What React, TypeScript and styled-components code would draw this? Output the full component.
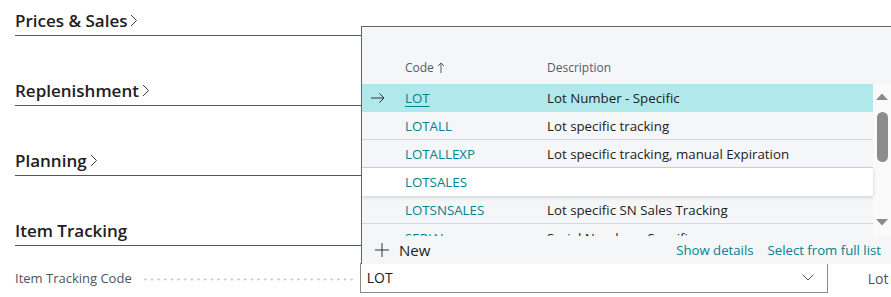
import React from "react";
import styled, { createGlobalStyle } from "styled-components";

const GlobalStyle = createGlobalStyle`
  html, body {
    margin: 0;
    padding: 0;
    background: #ffffff;
    overflow: hidden;
  }
  body {
    font-family: "Open Sans", "Noto Sans", sans-serif;
    color: #212121;
  }
`;

const TEAL = "#00838c";

type Lookup = { code: string; description: string; state?: "selected" | "hover" };

const lookups: Lookup[] = [
  { code: "LOT", description: "Lot Number - Specific", state: "selected" },
  { code: "LOTALL", description: "Lot specific tracking" },
  { code: "LOTALLEXP", description: "Lot specific tracking, manual Expiration" },
  { code: "LOTSALES", description: "", state: "hover" },
  { code: "LOTSNSALES", description: "Lot specific SN Sales Tracking" },
  { code: "SERIAL", description: "Serial Number - Specific" },
];

const sections = [
  { title: "Prices & Sales", more: true },
  { title: "Replenishment", more: true },
  { title: "Planning", more: true },
  { title: "Item Tracking", more: false },
];

function Chevron() {
  return (
    <svg width="8" height="13" viewBox="0 0 8 13">
      <polyline points="1,1 6.5,6.5 1,12" fill="none" stroke="#3b3b3b" strokeWidth="1" />
    </svg>
  );
}

function App() {
  return (
    <>
      <GlobalStyle />
      <Page>
        {sections.map((s) => (
          <Section key={s.title}>
            <Heading>
              {s.title}
              {s.more && <Chevron />}
            </Heading>
          </Section>
        ))}

        <FieldRow>
          <FieldLabel>Item Tracking Code</FieldLabel>
          <Leader />
          <Combo>
            <span>LOT</span>
            <svg width="12" height="7" viewBox="0 0 12 7">
              <polyline points="0.5,0.5 6,6 11.5,0.5" fill="none" stroke="#505050" strokeWidth="1" />
            </svg>
          </Combo>
          <NextLabel>Lot</NextLabel>
        </FieldRow>

        <Dropdown>
          <ColumnHeader>
            <span />
            <span>
              Code
              <svg width="8" height="11" viewBox="0 0 8 11">
                <line x1="4" y1="1" x2="4" y2="11" stroke="#505c6d" strokeWidth="1" />
                <polyline points="1,4 4,1 7,4" fill="none" stroke="#505c6d" strokeWidth="1" />
              </svg>
            </span>
            <span>Description</span>
          </ColumnHeader>

          <ListArea>
            <Rows>
              {lookups.map((row) => (
                <Row key={row.code} $state={row.state}>
                  <RowMarker>
                    {row.state === "selected" && (
                      <svg width="14" height="10" viewBox="0 0 14 10">
                        <line x1="0" y1="5" x2="13" y2="5" stroke="#333" strokeWidth="1" />
                        <polyline points="8.5,0.5 13,5 8.5,9.5" fill="none" stroke="#333" strokeWidth="1" />
                      </svg>
                    )}
                  </RowMarker>
                  <CodeCell $active={row.state === "selected"}>{row.code}</CodeCell>
                  <span>{row.description}</span>
                </Row>
              ))}
            </Rows>
            <Scrollbar>
              <svg width="12" height="7" viewBox="0 0 12 7">
                <polygon points="0,7 6,0.5 12,7" fill="#8a8a8a" />
              </svg>
              <Thumb />
              <svg width="12" height="7" viewBox="0 0 12 7">
                <polygon points="0,0 12,0 6,6.5" fill="#8a8a8a" />
              </svg>
            </Scrollbar>
          </ListArea>

          <Footer>
            <NewAction>
              <svg width="14" height="14" viewBox="0 0 14 14">
                <line x1="7" y1="0" x2="7" y2="14" stroke="#333" strokeWidth="1" />
                <line x1="0" y1="7" x2="14" y2="7" stroke="#333" strokeWidth="1" />
              </svg>
              New
            </NewAction>
            <FooterLinks>
              <span>Show details</span>
              <span>Select from full list</span>
            </FooterLinks>
          </Footer>
        </Dropdown>
      </Page>
    </>
  );
}

const Page = styled.div`
  position: relative;
  width: 891px;
  height: 297px;
  padding-left: 15px;
  box-sizing: border-box;
`;

const Section = styled.section`
  margin-bottom: 34px;
  &:last-of-type {
    margin-bottom: 17px;
  }
`;

const Heading = styled.h2`
  margin: 0;
  height: 36px;
  box-sizing: border-box;
  display: flex;
  align-items: flex-end;
  gap: 3px;
  padding-bottom: 3px;
  font-size: 17px;
  font-weight: 600;
  color: #212121;
  border-bottom: 1px solid #505965;

  svg {
    margin-bottom: 5px;
  }
`;

const FieldRow = styled.div`
  display: flex;
  align-items: center;
  height: 30px;
`;

const FieldLabel = styled.label`
  font-size: 13px;
  color: #4b5563;
  white-space: nowrap;
`;

const Leader = styled.div`
  flex: 0 0 auto;
  width: 212px;
  height: 3px;
  margin: 3px 6px 0 10px;
  background-image: radial-gradient(circle, #c4c4c4 0.9px, transparent 1.2px);
  background-size: 6.66px 3px;
  background-repeat: repeat-x;
`;

const Combo = styled.div`
  flex: 0 0 auto;
  width: 468px;
  height: 30px;
  box-sizing: border-box;
  display: flex;
  align-items: center;
  justify-content: space-between;
  padding: 0 13px 1px 6px;
  border: 1px solid #8a8886;
  background: #fff;
  font-size: 14px;
  color: #212121;
`;

const NextLabel = styled.span`
  margin-left: 40px;
  font-size: 14px;
  color: #4b5563;
`;

const Dropdown = styled.div`
  position: absolute;
  left: 361px;
  top: 26px;
  width: 531px;
  height: 238px;
  box-sizing: border-box;
  display: flex;
  flex-direction: column;
  background: #f5f6f8;
  border: 1px solid #5b6571;
  border-bottom: none;
`;

const ColumnHeader = styled.div`
  display: grid;
  grid-template-columns: 43px 142px 1fr;
  align-items: end;
  height: 57px;
  padding-bottom: 8px;
  box-sizing: border-box;
  font-size: 12px;
  color: #505c6d;

  span {
    display: flex;
    align-items: center;
    gap: 3px;
  }
`;

const ListArea = styled.div`
  display: flex;
  height: 152px;
  overflow: hidden;
`;

const Rows = styled.div`
  flex: 0 0 511px;
  display: flex;
  flex-direction: column;
`;

const Row = styled.div<{ $state?: "selected" | "hover" }>`
  position: relative;
  flex: 0 0 28px;
  box-sizing: border-box;
  display: grid;
  grid-template-columns: 43px 142px 1fr;
  align-items: center;
  font-size: 13.3px;
  color: #212121;
  border-bottom: 1px solid #d6d8db;
  background: ${({ $state }) =>
    $state === "selected" ? "#b1e8eb" : $state === "hover" ? "#ffffff" : "transparent"};
  ${({ $state }) =>
    $state === "hover" &&
    `
    z-index: 1;
    border-bottom-color: transparent;
    box-shadow: 0 1px 4px rgba(0, 0, 0, 0.18);
  `}
`;

const RowMarker = styled.span`
  display: flex;
  justify-content: flex-end;
  padding-right: 20px;
`;

const CodeCell = styled.span<{ $active?: boolean }>`
  color: ${TEAL};
  text-decoration: ${({ $active }) => ($active ? "underline" : "none")};
  text-underline-offset: 3px;
`;

const Scrollbar = styled.div`
  flex: 0 0 18px;
  display: flex;
  flex-direction: column;
  align-items: center;
  padding: 9px 0 10px;
  box-sizing: border-box;
  background: #fafafa;

  svg:last-child {
    margin-top: auto;
  }
`;

const Thumb = styled.div`
  width: 11px;
  height: 50px;
  margin-top: 12px;
  border-radius: 6px;
  background: #8c8c8c;
`;

const Footer = styled.div`
  flex: 1;
  display: flex;
  align-items: center;
  justify-content: space-between;
  padding: 0 10px 0 13px;
`;

const NewAction = styled.span`
  display: flex;
  align-items: center;
  gap: 10px;
  font-size: 15px;
  color: #212121;
`;

const FooterLinks = styled.span`
  display: flex;
  gap: 14px;
  font-size: 13.2px;
  color: ${TEAL};
`;

export default App;
